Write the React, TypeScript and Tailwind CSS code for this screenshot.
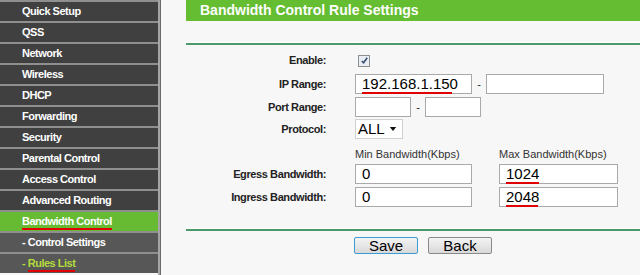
const menu = [
  "Quick Setup",
  "QSS",
  "Network",
  "Wireless",
  "DHCP",
  "Forwarding",
  "Security",
  "Parental Control",
  "Access Control",
  "Advanced Routing",
];

function Field({ w, value, mark }: { w: string; value?: string; mark?: string }) {
  return (
    <div className={`relative h-[20px] ${w} border border-[#a9a9a9] bg-white pl-[6px] text-[15px] leading-[18px] text-black`}>
      {value}
      {mark && <span className={`absolute left-[6px] top-[17px] h-[2px] ${mark} bg-[#e00000]`} />}
    </div>
  );
}

export default function App() {
  return (
    <div className="flex h-[275px] w-[640px] overflow-hidden bg-[#f7f7f7] font-['Liberation_Sans',Arial,sans-serif]">
      <div className="flex w-[158px] shrink-0 flex-col text-[11px] font-bold tracking-[-0.5px]">
        {menu.map((m) => (
          <div key={m} className="h-[21px] shrink-0 border-t-2 border-[#8f8f8f] bg-[#404040] pl-[22px] leading-[19px] text-white">
            {m}
          </div>
        ))}
        <div className="h-[21px] shrink-0 border-t-2 border-[#8f8f8f] bg-[#66bb33] pl-[22px] leading-[19px] text-white">
          <span className="border-b-2 border-[#e00000] pb-[1px]">Bandwidth Control</span>
        </div>
        <div className="h-[21px] shrink-0 border-t-2 border-[#8f8f8f] bg-[#575757] pl-[22px] leading-[19px] text-white">
          - Control Settings
        </div>
        <div className="h-[21px] shrink-0 border-t-2 border-[#8f8f8f] bg-[#575757] pl-[22px] leading-[19px] text-[#b5dc3c]">
          - <span className="border-b-2 border-[#e00000] pb-[1px]">Rules List</span>
        </div>
      </div>
      <div className="w-[3px] shrink-0 border-l-2 border-[#a5a5a5] bg-[#6a6a6a]" />
      <div className="flex-1 pl-[25px]">
        <div className="h-[21px] bg-[#65bd31] pl-[14px] text-[14px] font-bold leading-[21px] text-white">
          Bandwidth Control Rule Settings
        </div>
        <div className="mt-[21px] h-[3px] border-t border-white bg-[#4c9a6c]" />
        <div className="flex flex-col text-[11px] text-[#222]">
          <div className="mt-[8px] flex h-[15px] items-center">
            <div className="w-[140px] text-right font-bold tracking-[-0.4px]">Enable:</div>
            <div className="ml-[32px] flex h-[12px] w-[12px] items-center justify-center border border-[#8e8f8f] bg-[#e8eef4]">
              <svg viewBox="0 0 10 10" className="h-[9px] w-[9px]">
                <path d="M2 5.5 L4 7.5 L8 2" fill="none" stroke="#3c4f74" strokeWidth="1.8" />
              </svg>
            </div>
          </div>
          <div className="mt-[6px] flex items-center">
            <div className="w-[140px] text-right font-bold tracking-[-0.4px]">IP Range:</div>
            <div className="ml-[29px]"><Field w="w-[117px]" value="192.168.1.150" mark="w-[90px]" /></div>
            <div className="w-[14px] text-center">-</div>
            <Field w="w-[118px]" />
          </div>
          <div className="mt-[3px] flex items-center">
            <div className="w-[140px] text-right font-bold tracking-[-0.4px]">Port Range:</div>
            <div className="ml-[29px]"><Field w="w-[56px]" /></div>
            <div className="w-[14px] text-center">-</div>
            <Field w="w-[56px]" />
          </div>
          <div className="mt-[2px] flex items-center">
            <div className="w-[140px] text-right font-bold tracking-[-0.4px]">Protocol:</div>
            <div className="ml-[29px] flex h-[20px] w-[48px] items-center justify-between border border-[#d0d0d0] bg-white pl-[2px] pr-[5px] text-[15px] text-black">
              ALL
              <svg viewBox="0 0 8 5" className="h-[4px] w-[8px]"><path d="M0 0 H8 L4 5 Z" fill="#111" /></svg>
            </div>
          </div>
          <div className="mt-[8px] flex h-[14px] items-center text-[#333]">
            <div className="ml-[169px] w-[144px]">Min Bandwidth(Kbps)</div>
            <div>Max Bandwidth(Kbps)</div>
          </div>
          <div className="mt-[3px] flex items-center">
            <div className="w-[140px] text-right font-bold tracking-[-0.4px]">Egress Bandwidth:</div>
            <div className="ml-[29px]"><Field w="w-[117px]" value="0" /></div>
            <div className="ml-[27px]"><Field w="w-[119px]" value="1024" mark="w-[33px]" /></div>
          </div>
          <div className="mt-[3px] flex items-center">
            <div className="w-[140px] text-right font-bold tracking-[-0.4px]">Ingress Bandwidth:</div>
            <div className="ml-[29px]"><Field w="w-[117px]" value="0" /></div>
            <div className="ml-[27px]"><Field w="w-[119px]" value="2048" mark="w-[32px]" /></div>
          </div>
        </div>
        <div className="mt-[21px] h-[3px] border-t border-white bg-[#4c9a6c]" />
        <div className="mt-[6px] flex gap-[10px] pl-[168px]">
          <button className="h-[17px] w-[64px] rounded-[2px] border border-[#3c9ad4] bg-gradient-to-b from-[#f4f4f4] to-[#d9d9d9] text-[15px] leading-[15px] text-black">
            Save
          </button>
          <button className="h-[17px] w-[64px] rounded-[2px] border border-[#8a8a8a] bg-gradient-to-b from-[#f4f4f4] to-[#d9d9d9] text-[15px] leading-[15px] text-black">
            Back
          </button>
        </div>
      </div>
    </div>
  );
}
